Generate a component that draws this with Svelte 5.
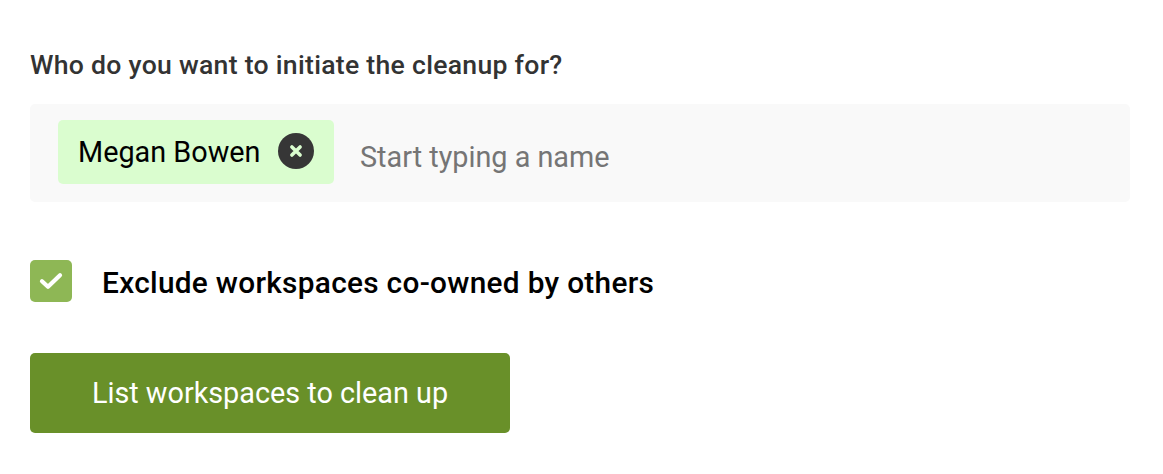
<script>
    let people = $state(["Megan Bowen"]);
    let query = $state("");
    let excludeCoOwned = $state(true);

    function removePerson(index)
    {
        people.splice(index, 1);
    }
</script>

<div class="container">
    <label class="question" for="person">Who do you want to initiate the cleanup for?</label>
    <div class="picker">
        {#each people as person, i}
            <div class="chip">
                <span>{person}</span>
                <button class="remove" aria-label="Remove" onclick={() => removePerson(i)}>
                    <svg width="36" height="36" viewBox="0 0 36 36">
                        <circle cx="18" cy="18" r="18" fill="#363636"/>
                        <path d="M13.9 13.9 22.1 22.1M22.1 13.9 13.9 22.1" stroke="#dafdcf" stroke-width="3.6" stroke-linecap="round"/>
                    </svg>
                </button>
            </div>
        {/each}
        <input id="person" type="text" placeholder="Start typing a name" bind:value={query}/>
    </div>
    <label class="option">
        <input type="checkbox" bind:checked={excludeCoOwned}/>
        <span class="box">
            {#if excludeCoOwned}
                <svg width="42" height="42" viewBox="0 0 42 42">
                    <path d="M12 21.2 18 26.7 30 15.2" fill="none" stroke="white" stroke-width="4.2" stroke-linecap="round" stroke-linejoin="round"/>
                </svg>
            {/if}
        </span>
        <span class="text">Exclude workspaces co-owned by others</span>
    </label>
    <button class="submit">List workspaces to clean up</button>
</div>

<style>
    :global(body) {
        background-color: white;
    }

    .container {
        box-sizing: border-box;
        width: 100%;
        height: 474px;
        padding: 50px 33px 0 30px;
        font-family: Roboto, sans-serif;
        color: black;
    }

    .question {
        display: block;
        height: 54px;
        font-size: 26.6px;
        line-height: 30px;
        font-weight: 500;
        letter-spacing: 0.28px;
        color: #333333;
        white-space: nowrap;
    }

    .picker {
        box-sizing: border-box;
        display: flex;
        height: 98px;
        padding: 16px 28px 18px;
        background-color: #f9f9f9;
        border-radius: 5px;
    }

    .chip {
        box-sizing: border-box;
        display: flex;
        align-items: center;
        justify-content: space-between;
        width: 276px;
        height: 64px;
        padding: 0 20px;
        background-color: #dafdcf;
        border-radius: 5px;
        font-size: 28.8px;
        white-space: nowrap;
    }

    .remove {
        width: 36px;
        height: 36px;
        margin-bottom: 2px;
        padding: 0;
        border: 0;
        background: none;
    }

    .remove svg, .box svg {
        display: block;
    }

    .picker input {
        flex: 1;
        min-width: 0;
        margin-left: 26px;
        padding: 10px 0 0;
        border: 0;
        outline: 0;
        background: none;
        font-family: inherit;
        font-size: 28.8px;
    }

    .picker input::placeholder {
        color: #757575;
    }

    .option {
        display: flex;
        align-items: center;
        gap: 30px;
        height: 42px;
        margin-top: 58px;
    }

    .option input {
        appearance: none;
        width: 0;
        height: 0;
        margin: 0 -30px 0 0;
    }

    .box {
        width: 42px;
        height: 42px;
        background-color: #8eb755;
        border-radius: 5px;
    }

    .text {
        font-size: 29.8px;
        font-weight: 500;
        letter-spacing: 0.3px;
        padding-top: 2px;
        white-space: nowrap;
    }

    .submit {
        width: 480px;
        height: 80px;
        margin-top: 51px;
        padding: 0;
        border: 0;
        border-radius: 5px;
        background-color: #699029;
        color: white;
        font-family: inherit;
        font-size: 28.8px;
    }
</style>
